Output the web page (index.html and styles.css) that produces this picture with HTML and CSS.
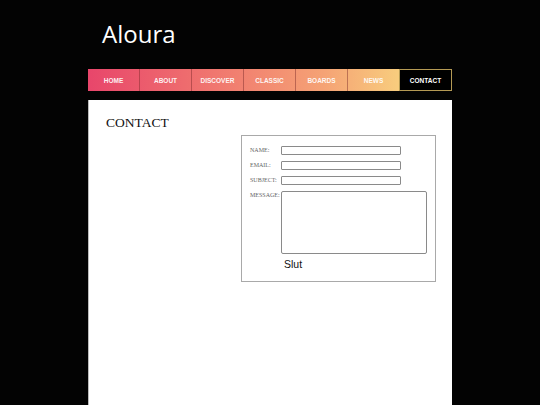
FILE: index.html
```html
<!DOCTYPE html>
<html>
<head>
<meta charset="utf-8">
<link rel="stylesheet" href="styles.css">
</head>
<body>
<div class="wrap">
  <header class="header"><h1 class="logo">Aloura</h1></header>
  <nav class="nav">
    <a class="nav-item i1">HOME</a>
    <a class="nav-item i2">ABOUT</a>
    <a class="nav-item i3">DISCOVER</a>
    <a class="nav-item i4">CLASSIC</a>
    <a class="nav-item i5">BOARDS</a>
    <a class="nav-item i6">NEWS</a>
    <a class="nav-item active">CONTACT</a>
  </nav>
  <main class="panel">
    <h2 class="title">CONTACT</h2>
    <div class="form-row">
      <form class="form">
        <label class="lbl">NAME:</label><span class="field"></span>
        <label class="lbl">EMAIL:</label><span class="field"></span>
        <label class="lbl">SUBJECT:</label><span class="field"></span>
        <label class="lbl">MESSAGE:</label><span class="area"></span>
        <span></span><span class="send">Slut</span>
      </form>
    </div>
  </main>
</div>
</body>
</html>
```

FILE: styles.css
```css
html, body { margin: 0; padding: 0; }
body {
  background: #030303;
  height: 405px;
  overflow: hidden;
}
.wrap {
  width: 364px;
  margin: 0 auto;
  display: flex;
  flex-direction: column;
}
.header { height: 69px; }
.logo {
  margin: 0;
  padding: 17px 0 0 14px;
  font-family: "Open Sans", sans-serif;
  font-weight: 400;
  font-size: 24px;
  line-height: 33px;
  color: #fff;
}
.nav {
  display: flex;
  height: 22px;
  background: linear-gradient(90deg, #e8466b 0%, #f0776f 35%, #f5a375 65%, #f9da80 92%);
}
.nav-item {
  flex: 1;
  display: flex;
  align-items: center;
  justify-content: center;
  font-family: "Liberation Sans", Arial, sans-serif;
  font-weight: bold;
  font-size: 6.5px;
  color: rgba(255, 255, 255, 0.92);
  border-right: 1px solid rgba(120, 40, 40, 0.45);
}
.nav-item.i6 { border-right: none; }
.nav-item.active {
  background: #000;
  border: 1px solid #b59a55;
  color: #fff;
}
.panel {
  margin-top: 9px;
  background: #fff;
  border-left: 1px solid #bbb;
  height: 306px;
  padding: 15px 16px 0 17px;
  box-sizing: border-box;
}
.title {
  margin: 0;
  font-family: "Liberation Serif", "Times New Roman", serif;
  font-weight: normal;
  font-size: 13.5px;
  line-height: 15px;
  color: #111;
}
.form-row {
  display: flex;
  justify-content: flex-end;
  margin-top: 5px;
}
.form {
  width: 195px;
  height: 147px;
  box-sizing: border-box;
  border: 1px solid #a9a9a9;
  padding: 10px 8px 0 8px;
  display: grid;
  grid-template-columns: 31px 146px;
  grid-auto-rows: min-content;
  row-gap: 6px;
}
.lbl {
  font-family: "Liberation Serif", serif;
  font-size: 6px;
  color: #666;
  line-height: 9px;
}
.field {
  width: 120px;
  height: 9px;
  box-sizing: border-box;
  border: 1px solid #8a8a8a;
  border-radius: 1px;
}
.area {
  height: 63px;
  box-sizing: border-box;
  border: 1px solid #8a8a8a;
  border-radius: 2px;
}
.send {
  margin-top: -2px;
  padding-left: 3px;
  font-family: "Liberation Sans", Arial, sans-serif;
  font-size: 10.5px;
  color: #111;
}
```
